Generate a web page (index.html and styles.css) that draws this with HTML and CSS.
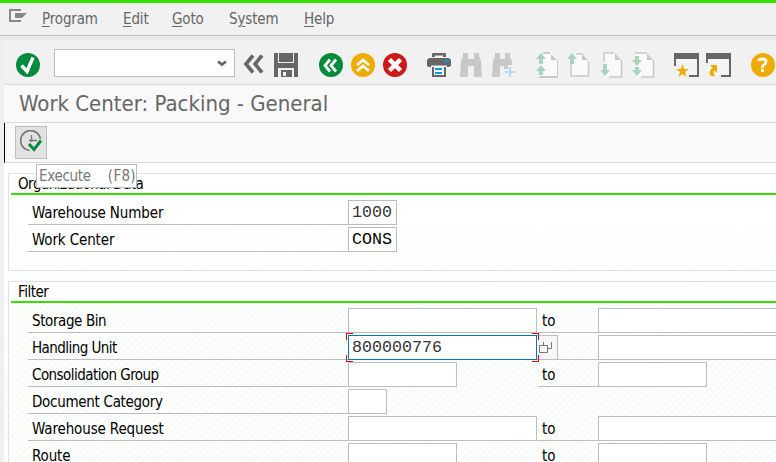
FILE: index.html
```html
<!DOCTYPE html>
<html lang="en">
<head>
<meta charset="utf-8">
<title>Work Center: Packing - General</title>
<link rel="stylesheet" href="styles.css">
</head>
<body>
<div class="window">
  <nav class="menu">
    <svg class="menu-icon" width="18" height="13" viewBox="0 0 18 13"><path d="M12 1H1v11h11" fill="none" stroke="#888" stroke-width="2"/><path d="M6 4h12l-5 5H6z" fill="#888"/></svg>
    <span class="m1"><u>P</u>rogram</span><span class="m2"><u>E</u>dit</span><span class="m3"><u>G</u>oto</span><span class="m4">S<u>y</u>stem</span><span class="m5"><u>H</u>elp</span>
  </nav>
  <div class="toolbar">
    <svg class="icon i-ok" viewBox="0 0 24 24"><circle cx="12" cy="12" r="12" fill="#008c3c"/><path d="M5.500 12.500l5.500 6L17 4.500" fill="none" stroke="#fff" stroke-width="3.400"/></svg>
    <div class="command"><svg width="10" height="7" viewBox="0 0 10 7"><path d="M1 1.500l4 3 4-3" fill="none" stroke="#666" stroke-width="2.800"/></svg></div>
    <svg class="icon i-collapse" viewBox="0 0 24 24"><path d="M10 2.500L3 11l7 8.500M19 2.500L12 11l7 8.500" fill="none" stroke="#666" stroke-width="3.600"/></svg>
    <svg class="icon i-save" viewBox="0 0 24 24"><path d="M0 0h24v24H0z" fill="#666"/><path d="M4 0h1v9h14V0h1v10H4z" fill="#f0f0f0"/><path d="M4 15h16v9h-2v-7H7v7H4z" fill="#f0f0f0"/><path d="M9 19h3v4H9z" fill="#f0f0f0"/></svg>
    <svg class="icon i-back" viewBox="0 0 24 24"><circle cx="12" cy="12" r="12" fill="#008c3c"/><path d="M11 6.500L6 12.500l5 6M17 6.500l-5 6 5 6" fill="none" stroke="#fff" stroke-width="2.800"/></svg>
    <svg class="icon i-exit" viewBox="0 0 24 24"><circle cx="12" cy="12" r="12" fill="#f0ab00"/><path d="M6 12l6-5 6 5M6 18l6-5 6 5" fill="none" stroke="#fff" stroke-width="2.800"/></svg>
    <svg class="icon i-cancel" viewBox="0 0 24 24"><circle cx="12" cy="12" r="12" fill="#cc1919"/><path d="M6.500 6.500l11 11M17.500 6.500l-11 11" fill="none" stroke="#fff" stroke-width="4.500"/></svg>
    <svg class="icon i-print" viewBox="0 0 24 24"><path d="M5 4V1q0-1 1-1h12q1 0 1 1v3h-3V2.500H8V4z" fill="#666"/><path d="M2 5h20l2 2v6l-2 1H2l-2-1V7z" fill="#666"/><path d="M18 7h4v2h-4z" fill="#009de0"/><path d="M5 14h14v10H5z" fill="#666"/><path d="M4 12.500h16v1.500H19v0H5V14H4z" fill="#f1f1f1"/><path d="M7 13h10v9H7z" fill="#f4f4f4"/><path d="M8 15h7v2H8zm0 4h7v2H8z" fill="#009de0"/></svg>
    <svg class="icon i-find" viewBox="0 0 24 24"><path d="M3 0h5v6h6V0h5v3l2 5 1 16h-8V13H8v11H0L1 8l2-5z" fill="#c8c8c8"/></svg>
    <svg class="icon i-findnext" viewBox="0 0 24 24"><path d="M3 0h5v6h5V0h5v4l2 4v4h-4v4h-4v-3H8v11H0L1 8l2-5z" fill="#c8c8c8"/><path d="M18 14v10M13 19h10" stroke="#a8daf0" stroke-width="2"/></svg>
    <svg class="icon i-first" viewBox="0 0 24 24"><path d="M6 0h10l5 6v17H3V3z" fill="#fafafa"/><path d="M7 0h7M3 24h19" stroke="#c8c8c8" stroke-width="2"/><path d="M21.500 7v16" stroke="#c8c8c8"/><path d="M15 1v6h6z" fill="#c8c8c8"/><path d="M5 0l5 6H7v5H3V6H0zM5 12l5 6H7v4H3v-4H0z" fill="#a9d4bd"/></svg>
    <svg class="icon i-prev" viewBox="0 0 24 24"><path d="M3 1h11l6 6v16H3z" fill="#fafafa"/><path d="M8 1h7M3 11v12h17.500V8" fill="none" stroke="#c8c8c8" stroke-width="1.500"/><path d="M14 1v6h6z" fill="#c8c8c8"/><path d="M4 0l5 6H6v5H2V6h-3z" fill="#a9d4bd"/></svg>
    <svg class="icon i-next" viewBox="0 0 24 24"><path d="M4 0h11l6 7v17H4z" fill="#fafafa"/><path d="M4 9V0h10M9 24h12.500V7" fill="none" stroke="#c8c8c8" stroke-width="1.500"/><path d="M15 0v7h6z" fill="#c8c8c8"/><path d="M3 11h4v6h3l-5 6-5-6h3z" fill="#a9d4bd"/></svg>
    <svg class="icon i-last" viewBox="0 0 24 24"><path d="M4 0h11l6 7v17H4z" fill="#fafafa"/><path d="M3 0h12M9 24h12.500V7" fill="none" stroke="#c8c8c8" stroke-width="1.500"/><path d="M15 0v7h6z" fill="#c8c8c8"/><path d="M3 3h4v4h3l-5 6-5-6h3zM3 14h4v3h3l-5 6-5-6h3z" fill="#a9d4bd"/></svg>
    <svg class="icon wide i-session" viewBox="0 0 25 24"><path d="M0 0h25v24H15v-2h8V6H2v7H0z" fill="#666"/><path d="M2 6h21v16H2z" fill="#f4f4f4"/><path d="M8.500 11l1.700 5H15l-4 3 1.500 5-4-3-4 3L6 19l-4-3h4.800z" fill="#f0ab00"/></svg>
    <svg class="icon wide i-shortcut" viewBox="0 0 25 24"><path d="M0 0h25v24H15v-2h8V6H2v4H0z" fill="#666"/><path d="M2 6h21v16H2z" fill="#f4f4f4"/><path d="M4 12h7v8l-2.500-2.500Q6.500 19 9 23q-6 1-5.500-4Q4 16 6.500 15z" fill="#f0ab00"/></svg>
    <svg class="icon i-help" viewBox="0 0 24 24"><circle cx="12" cy="12" r="12" fill="#f0ab00"/><path d="M7.500 8Q8 6 11.500 6T15 9q0 2-2 3t-1.500 3" fill="none" stroke="#fff" stroke-width="2.800"/><path d="M10 16h3v3h-3z" fill="#fff"/></svg>
  </div>
  <h1 class="title">Work Center: Packing - General</h1>
  <div class="actions">
    <div class="execute">
      <svg width="24" height="24" viewBox="0 0 24 24"><path d="M9.500 20.500A10 10 0 1 1 20.500 9" fill="none" stroke="#777" stroke-width="1.700"/><path d="M11.500 5v7M9 10.500h8" stroke="#777" stroke-width="1.300"/><path d="M9 14l5 5.500 7-9" fill="none" stroke="#008c3c" stroke-width="3"/></svg>
      <div class="tooltip"><span>Execute</span><span class="key">(F8)</span></div>
    </div>
  </div>
  <main class="content">
    <section class="group org">
      <h2 class="s7">Organizational Data</h2>
      <div class="row"><label class="s2">Warehouse Number</label><div class="field tiny">1000</div></div>
      <div class="row"><label class="s2">Work Center</label><div class="field tiny dark">CONS</div></div>
    </section>
    <section class="group filter">
      <h2 class="s7">Filter</h2>
      <div class="row"><label class="s4">Storage Bin</label><div class="field long"></div><span class="to">to</span><div class="field long"></div></div>
      <div class="row"><label class="s6">Handling Unit</label><div class="field long focus">800000776<i class="corner tl"></i><i class="corner tr"></i><i class="corner bl"></i><i class="corner br"></i></div><div class="help"><svg width="15" height="15" viewBox="0 0 15 15"><path d="M1.500 5.500h8v7h-8zM5.500 2v3.500M10 8.500h3.500V2" fill="none" stroke="#777"/></svg></div><span class="rule"></span><div class="field long"></div></div>
      <div class="row"><label class="s6">Consolidation Group</label><div class="field mid"></div><span class="to">to</span><div class="field mid"></div></div>
      <div class="row"><label class="s3">Document Category</label><div class="field short"></div></div>
      <div class="row"><label class="s2">Warehouse Request</label><div class="field long"></div><span class="to">to</span><div class="field long"></div></div>
      <div class="row"><label class="s2">Route</label><div class="field mid"></div><span class="to">to</span><div class="field mid"></div></div>
    </section>
  </main>
</div>
</body>
</html>
```
FILE: styles.css
```css
* { box-sizing: border-box; }
body {
  margin: 0;
  width: 776px;
  height: 462px;
  overflow: hidden;
  background: #f0f0f0;
  font: 15px/20px "DejaVu Sans Condensed", "Noto Sans", sans-serif;
  color: #000;
}
.window { height: 462px; border-top: 3px solid #36e000; overflow: hidden; }
.menu {
  display: flex;
  height: 37px;
  padding: 6px 0 0 9px;
  background: linear-gradient(#f1f1f1 32px, #c0c0c0 32px, #c0c0c0 33px, #e8e8e8 33px);
  color: #666;
  letter-spacing: -0.15px;
}
.menu span { flex: none; white-space: nowrap; }
.menu u { text-decoration-thickness: 1px; text-underline-offset: 2px; }
.menu-icon { flex: none; width: 18px; margin-right: 15px; }
.m1 { width: 81px; }
.m2 { width: 49px; }
.m3 { width: 57px; }
.m4 { width: 75px; }

.toolbar {
  display: flex;
  height: 45px;
  margin-left: 4px;
  padding: 13px 0 0 12px;
  border-bottom: 1px solid #dadada;
  background: #f1f1f1;
  overflow: hidden;
}
.icon { flex: none; width: 24px; height: 24px; overflow: visible; }
.wide { width: 25px; }
.command {
  flex: none;
  display: flex;
  justify-content: flex-end;
  align-items: center;
  width: 181px;
  height: 28px;
  margin: -4px 0 0 14px;
  padding: 0 7px 0 0;
  border: 1px solid #bdbdbd;
  background: #fff;
}
.i-collapse { margin: 0 7px 0 8px; }
.i-back { margin-left: 21px; }
.i-exit, .i-cancel { margin-left: 8px; }
.i-print { margin-left: 20px; }
.i-find { margin-left: 9px; }
.i-findnext { margin-left: 8px; }
.i-first { margin-left: 20px; }
.i-prev, .i-next, .i-last { margin-left: 8px; }
.i-session { margin-left: 18px; }
.i-shortcut { margin-left: 7px; }
.i-help { margin-left: 20px; }

.title {
  height: 38px;
  margin: 0 0 0 4px;
  padding-left: 15px;
  border-bottom: 1px solid #dadada;
  background: #f9f9f9;
  color: #666;
  font-size: 22px;
  font-weight: normal;
  line-height: 37px;
  white-space: nowrap;
}
.actions {
  display: flex;
  height: 40px;
  margin-left: 4px;
  padding: 3px 0 0 10px;
  border-left: 1px solid #000;
  border-bottom: 1px solid #dadada;
  background: #f9f9f9;
}
.execute {
  position: relative;
  width: 32px;
  height: 33px;
  padding: 3px 0 0 4px;
  border: 1px solid #bdbdbd;
  background: #e2e2e2;
}
.tooltip {
  position: absolute;
  z-index: 1;
  left: 20px;
  top: 37px;
  display: flex;
  width: 101px;
  height: 24px;
  padding: 1px 2px;
  border: 1px solid #bdbdbd;
  background: #fff;
  color: #777;
  letter-spacing: -0.3px;
  white-space: nowrap;
}
.key { margin-left: 17px; letter-spacing: 0.3px; }

.content {
  height: 299px;
  margin-left: 4px;
  padding: 10px 0 0 4px;
  background:
    linear-gradient(#fff 20px, rgba(255, 255, 255, 0) 200px),
    repeating-linear-gradient(135deg, #fdfefd 0, #fdfefd 2px, #f5fbf6 3px, #f5fbf6 4px, #fdfefd 5px);
}
.group { width: 790px; border: 1px solid #e2e2e2; }
.org { height: 98px; }
.filter { height: 200px; margin-top: 10px; }
.group h2 {
  height: 21px;
  margin: 0 0 5px;
  padding-left: 9px;
  background: linear-gradient(#36e000, #36e000) 2px 19px / 100% 2px no-repeat, #fff;
  font-size: 15px;
  font-weight: normal;
  line-height: 20px;
}
.row { display: flex; height: 25px; margin: 0 0 2px 19px; }
.row label {
  flex: none;
  width: 320px;
  padding: 3px 0 0 4px;
  border-bottom: 1px solid #bdbdbd;
  white-space: nowrap;
}
.s2 { letter-spacing: -0.13px; }
.s3 { letter-spacing: -0.3px; }
.s4 { letter-spacing: -0.4px; }
.s6 { letter-spacing: -0.55px; }
.s7 { letter-spacing: -0.5px; }
.field {
  flex: none;
  position: relative;
  height: 25px;
  padding: 0 0 0 3px;
  border: 1px solid #bdbdbd;
  background: #fff;
  color: #333;
  font: 16.67px/23px "Liberation Mono", monospace;
}
.dark { color: #000; }
.tiny { width: 49px; }
.short { width: 39px; }
.mid { width: 109px; }
.long { width: 189px; }
.focus { border-color: #0078b8; }
.corner { position: absolute; width: 7px; height: 7px; border: 0 solid #e00000; }
.tl { left: -3px; top: -3px; border-width: 1px 0 0 1px; }
.tr { right: -3px; top: -3px; border-width: 1px 1px 0 0; }
.bl { left: -3px; bottom: -3px; border-width: 0 0 1px 1px; }
.br { right: -3px; bottom: -3px; border-width: 0 1px 1px 0; }
.to {
  flex: none;
  width: 60px;
  margin-left: 1px;
  padding: 3px 0 0 4px;
  border-bottom: 1px solid #bdbdbd;
}
.mid + .to { margin-left: 81px; }
.help {
  flex: none;
  width: 21px;
  height: 25px;
  padding: 4px 0 0 1px;
  border: 1px solid #bdbdbd;
  border-left: 0;
  background: #f6f6f6;
}
.rule { flex: none; width: 40px; border-bottom: 1px solid #bdbdbd; }
```
